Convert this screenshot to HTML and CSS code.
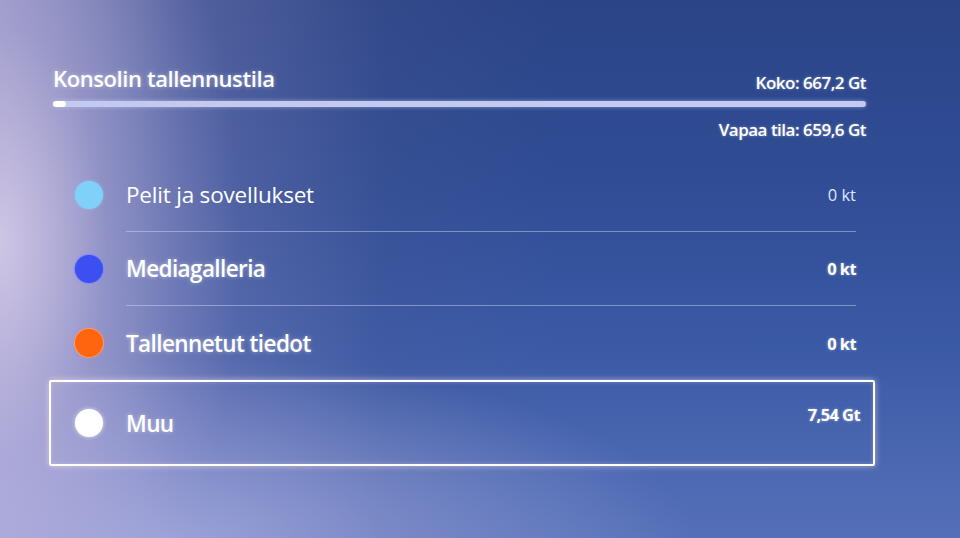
FILE: index.html
```html
<!DOCTYPE html>
<html lang="fi">
<head>
<meta charset="utf-8">
<title>Konsolin tallennustila</title>
<link rel="stylesheet" href="styles.css">
</head>
<body>
<main class="screen">
  <header class="head">
    <h1 class="title">Konsolin tallennustila</h1>
    <span class="size">Koko: 667,2 Gt</span>
  </header>
  <div class="bar"><div class="bar-fill"></div></div>
  <div class="free">Vapaa tila: 659,6 Gt</div>
  <ul class="list">
    <li class="row">
      <span class="dot dot-games"></span>
      <div class="content">
        <span class="label light">Pelit ja sovellukset</span>
        <span class="value light">0 kt</span>
      </div>
    </li>
    <li class="row">
      <span class="dot dot-media"></span>
      <div class="content">
        <span class="label">Mediagalleria</span>
        <span class="value">0 kt</span>
      </div>
    </li>
    <li class="row">
      <span class="dot dot-saved"></span>
      <div class="content last">
        <span class="label">Tallennetut tiedot</span>
        <span class="value">0 kt</span>
      </div>
    </li>
    <li class="row focused">
      <span class="dot dot-other"></span>
      <div class="content last">
        <span class="label">Muu</span>
        <span class="value">7,54 Gt</span>
      </div>
    </li>
  </ul>
</main>
</body>
</html>
```

FILE: styles.css
```css
* { box-sizing: border-box; }

html, body {
  margin: 0;
  padding: 0;
  width: 960px;
  height: 538px;
  overflow: hidden;
}

body {
  font-family: "Open Sans", "Noto Sans", sans-serif;
  color: #ffffff;
  background:
    radial-gradient(ellipse 240px 480px at 0% 45%, rgba(222, 210, 236, 0.8) 0%, rgba(190, 180, 222, 0.4) 45%, rgba(160, 160, 210, 0) 100%),
    radial-gradient(ellipse 520px 180px at 18% 100%, rgba(175, 178, 228, 0.7) 0%, rgba(150, 160, 215, 0) 100%),
    linear-gradient(to right, rgba(180, 172, 215, 0.75) 0%, rgba(135, 135, 190, 0.45) 18%, rgba(85, 95, 150, 0.18) 40%, rgba(60, 80, 150, 0) 58%),
    linear-gradient(to bottom, #2b4487 0%, #304d95 35%, #3b5aa6 65%, #5570b8 100%),
    #34508f;
  background-color: #34508f;
}

.screen {
  padding: 64px 94px 0 53px;
}

.head {
  display: flex;
  justify-content: space-between;
  align-items: flex-end;
}

.title {
  margin: 0;
  font-size: 22px;
  font-weight: 600;
  letter-spacing: -0.4px;
  line-height: 28px;
  text-shadow: 0 0 4px rgba(255, 255, 255, 0.45);
}

.size {
  font-size: 17px;
  font-weight: 600;
  letter-spacing: -0.5px;
  line-height: 22px;
  margin-bottom: -2px;
  text-shadow: 0 0 3px rgba(255, 255, 255, 0.4);
}

.bar {
  margin-top: 9px;
  height: 6px;
  border-radius: 3px;
  background: #c3c9ef;
  box-shadow: 0 0 4px rgba(220, 225, 255, 0.5);
}

.bar-fill {
  width: 13px;
  height: 100%;
  border-radius: 3px;
  background: #ffffff;
}

.free {
  margin-top: 12px;
  text-align: right;
  font-size: 17px;
  font-weight: 600;
  letter-spacing: -0.5px;
  line-height: 22px;
  text-shadow: 0 0 3px rgba(255, 255, 255, 0.4);
}

.list {
  list-style: none;
  margin: 17px 10px 0 0;
  padding: 0 0 0 22px;
}

.row {
  display: flex;
  align-items: stretch;
  height: 74px;
}

.dot {
  flex: none;
  align-self: center;
  width: 28px;
  height: 28px;
  border-radius: 50%;
  margin-right: 23px;
}

.dot-games { background: #7fd1fa; box-shadow: 0 0 3px rgba(150, 220, 255, 0.6); }
.dot-media { background: #3c4ff0; box-shadow: 0 0 0 1px #7f86ff, 0 0 3px rgba(130, 140, 255, 0.6); }
.dot-saved { background: #ff640f; box-shadow: 0 0 0 1px #ff9a66, 0 0 3px rgba(255, 140, 80, 0.6); }
.dot-other { background: #ffffff; box-shadow: 0 0 4px rgba(255, 255, 255, 0.7); }

.content {
  flex: 1;
  display: flex;
  align-items: center;
  justify-content: space-between;
  border-bottom: 1px solid rgba(215, 222, 250, 0.45);
}

.content.last { border-bottom: none; }

.label {
  font-size: 22.5px;
  font-weight: 600;
  letter-spacing: -0.6px;
  text-shadow: 0 0 4px rgba(255, 255, 255, 0.45);
}

.value {
  font-size: 16.5px;
  font-weight: 700;
  letter-spacing: -0.6px;
  text-shadow: 0 0 3px rgba(255, 255, 255, 0.45);
}

.label.light {
  font-weight: 400;
  letter-spacing: -0.2px;
  text-shadow: none;
}

.value.light {
  font-weight: 400;
  color: #dfe6ff;
  letter-spacing: 0;
  text-shadow: none;
}

.row.focused {
  height: 86px;
  margin: 0 -19px 0 -26px;
  padding: 0 13px 0 24px;
  border: 2px solid #ffffff;
  border-radius: 2px;
  box-shadow: 0 0 6px rgba(255, 230, 240, 0.6), inset 0 0 4px rgba(255, 230, 240, 0.3);
}

.row.focused .value {
  margin-bottom: 18px;
}
```
